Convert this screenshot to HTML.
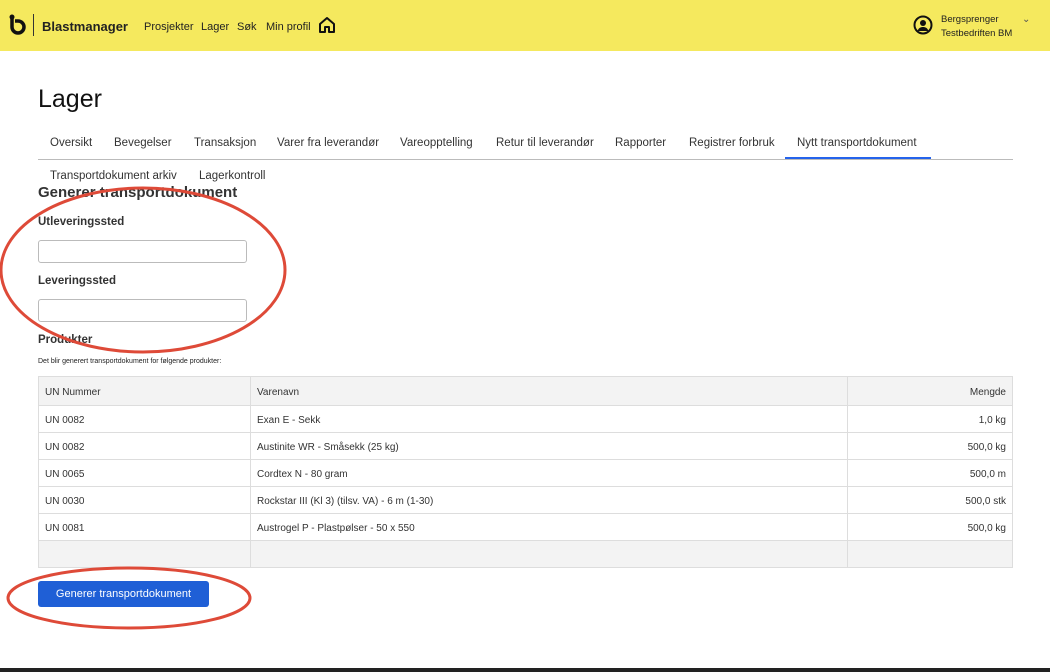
<!DOCTYPE html>
<html><head><style>
*{box-sizing:border-box;margin:0;padding:0}
body{width:1050px;height:672px;background:#fff;font-family:"Liberation Sans",Arial,sans-serif;color:#222;position:relative;overflow:hidden}
.hdr{position:absolute;left:0;top:0;width:1050px;height:51px;background:#f5e95e}
.t{position:absolute;white-space:nowrap}
.nav{font-size:11px;color:#222;top:21px}
.tabs{font-size:11.5px;color:#333;top:137px}
table{position:absolute;left:38px;top:376px;width:975px;border-collapse:collapse;font-size:10px;color:#333}
td{border:1px solid #ddd;height:27px;padding:0 6px;padding-top:2px}
tr.h td{background:#f3f3f3;height:29px}
tr.e td{background:#f3f3f3}
td.r{text-align:right}
input{position:absolute;left:38px;width:209px;height:23px;border:1px solid #bbb;border-radius:3px}
</style></head><body>
<div class="hdr"></div>
<svg class="t" style="left:9px;top:14px" width="20" height="22" viewBox="0 0 20 22"><path d="M3 3v10a6 6 0 1 0 6-6H6" fill="none" stroke="#111" stroke-width="3.5"/><circle cx="3" cy="3" r="2.5" fill="#111"/></svg>
<div class="t" style="left:33px;top:14px;width:1px;height:22px;background:#333"></div>
<div class="t" style="left:42px;top:19px;font-size:13px;font-weight:bold;color:#222">Blastmanager</div>
<div class="t nav" style="left:144px">Prosjekter</div>
<div class="t nav" style="left:201px">Lager</div>
<div class="t nav" style="left:237px">Søk</div>
<div class="t nav" style="left:266px">Min profil</div>
<svg class="t" style="left:318px;top:16px" width="18" height="18" viewBox="0 0 18 18"><path d="M2 8L9 2l7 6v8h-5v-5H7v5H2z" fill="none" stroke="#111" stroke-width="2" stroke-linejoin="round"/></svg>
<svg class="t" style="left:913px;top:15px" width="20" height="20" viewBox="0 0 20 20"><circle cx="10" cy="10" r="8.5" fill="none" stroke="#111" stroke-width="2"/><circle cx="10" cy="8" r="3" fill="#111"/><path d="M4.5 16c1-3 3-4 5.5-4s4.5 1 5.5 4" fill="#111"/></svg>
<div class="t" style="left:941px;top:14px;font-size:9.5px">Bergsprenger</div>
<div class="t" style="left:941px;top:28px;font-size:9.5px">Testbedriften BM</div>
<div class="t" style="left:1022px;top:14px;font-size:10px;color:#555">⌄</div>
<div class="t" style="left:38px;top:85px;font-size:25px;color:#111">Lager</div>
<div class="t tabs" style="left:50px">Oversikt</div>
<div class="t tabs" style="left:114px">Bevegelser</div>
<div class="t tabs" style="left:194px">Transaksjon</div>
<div class="t tabs" style="left:277px">Varer fra leverandør</div>
<div class="t tabs" style="left:400px">Vareopptelling</div>
<div class="t tabs" style="left:496px">Retur til leverandør</div>
<div class="t tabs" style="left:615px">Rapporter</div>
<div class="t tabs" style="left:689px">Registrer forbruk</div>
<div class="t tabs" style="left:797px">Nytt transportdokument</div>
<div class="t" style="left:38px;top:159px;width:975px;height:1px;background:#bbb"></div>
<div class="t" style="left:785px;top:157px;width:146px;height:2px;background:#2563eb"></div>
<div class="t tabs" style="left:50px;top:170px">Transportdokument arkiv</div>
<div class="t tabs" style="left:199px;top:170px">Lagerkontroll</div>
<div class="t" style="left:38px;top:184px;font-size:15px;font-weight:bold;color:#333">Generer transportdokument</div>
<div class="t" style="left:38px;top:216px;font-size:11.5px;font-weight:bold;color:#333">Utleveringssted</div>
<input style="top:240px">
<div class="t" style="left:38px;top:275px;font-size:11.5px;font-weight:bold;color:#333">Leveringssted</div>
<input style="top:299px">
<div class="t" style="left:38px;top:334px;font-size:11.5px;font-weight:bold;color:#333">Produkter</div>
<div class="t" style="left:38px;top:358px;font-size:7px;color:#222">Det blir generert transportdokument for følgende produkter:</div>
<table>
<tr class="h"><td style="width:212px">UN Nummer</td><td style="width:597px">Varenavn</td><td class="r">Mengde</td></tr>
<tr><td>UN 0082</td><td>Exan E - Sekk</td><td class="r">1,0 kg</td></tr>
<tr><td>UN 0082</td><td>Austinite WR - Småsekk (25 kg)</td><td class="r">500,0 kg</td></tr>
<tr><td>UN 0065</td><td>Cordtex N - 80 gram</td><td class="r">500,0 m</td></tr>
<tr><td>UN 0030</td><td>Rockstar III (Kl 3) (tilsv. VA) - 6 m (1-30)</td><td class="r">500,0 stk</td></tr>
<tr><td>UN 0081</td><td>Austrogel P - Plastpølser - 50 x 550</td><td class="r">500,0 kg</td></tr>
<tr class="e"><td></td><td></td><td></td></tr>
</table>
<div class="t" style="left:38px;top:581px;width:171px;height:26px;background:#1f5fd6;border-radius:3px;color:#fff;font-size:11px;text-align:center;line-height:27px">Generer transportdokument</div>
<svg class="t" style="left:0;top:0" width="1050" height="672"><ellipse cx="143" cy="270" rx="142" ry="82" fill="none" stroke="#de4a38" stroke-width="3"/><ellipse cx="129" cy="598" rx="121" ry="30" fill="none" stroke="#de4a38" stroke-width="3"/></svg>
<div class="t" style="left:0;top:668px;width:1050px;height:4px;background:#222"></div>
</body></html>
